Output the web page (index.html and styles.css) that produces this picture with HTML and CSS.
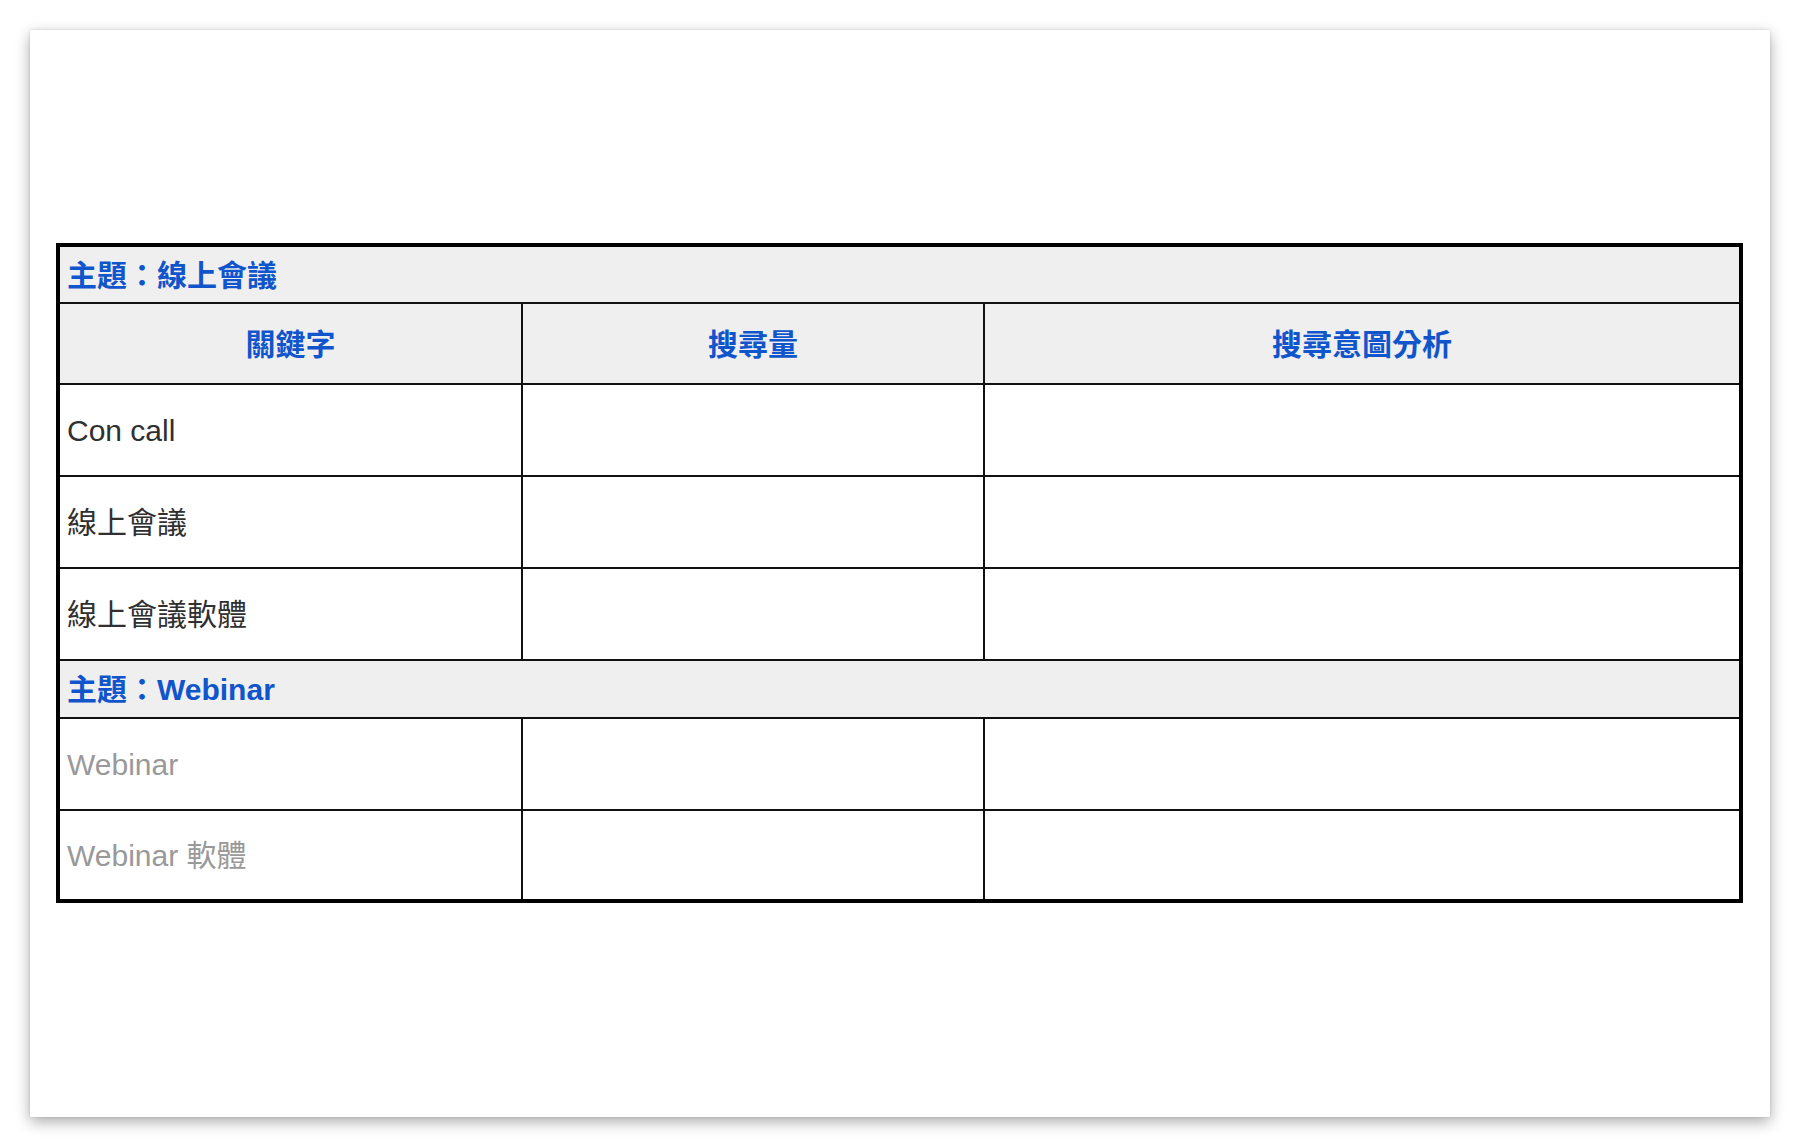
FILE: index.html
```html
<!DOCTYPE html>
<html lang="zh-Hant">
<head>
<meta charset="utf-8">
<title>關鍵字表</title>
<link rel="stylesheet" href="styles.css">
</head>
<body>
<div class="page">
  <table class="kw">
    <colgroup>
      <col class="c1"><col class="c2"><col class="c3">
    </colgroup>
    <tbody>
      <tr class="topic"><td colspan="3">主題：線上會議</td></tr>
      <tr class="head"><td>關鍵字</td><td>搜尋量</td><td>搜尋意圖分析</td></tr>
      <tr class="row"><td>Con call</td><td></td><td></td></tr>
      <tr class="row"><td>線上會議</td><td></td><td></td></tr>
      <tr class="row"><td>線上會議軟體</td><td></td><td></td></tr>
      <tr class="topic topic2"><td colspan="3">主題：Webinar</td></tr>
      <tr class="row muted"><td>Webinar</td><td></td><td></td></tr>
      <tr class="row muted last"><td>Webinar 軟體</td><td></td><td></td></tr>
    </tbody>
  </table>
</div>
</body>
</html>
```

FILE: styles.css
```css
html, body {
  margin: 0;
  padding: 0;
  background: #ffffff;
}

body {
  font-family: "Liberation Sans", "Noto Sans CJK TC", Arial, sans-serif;
  width: 1800px;
  height: 1148px;
  overflow: hidden;
}

.page {
  margin: 30px 0 0 30px;
  width: 1740px;
  height: 1087px;
  background: #ffffff;
  box-shadow: 0 5px 14px rgba(0, 0, 0, 0.32), 0 0 3px rgba(0, 0, 0, 0.12);
  padding-top: 213px;
  padding-left: 26px;
  box-sizing: border-box;
}

.kw {
  border-collapse: collapse;
  table-layout: fixed;
  width: 1683px;
  border: 4px solid #000;
  font-size: 30px;
  color: #303030;
}

.c1 { width: 464px; }
.c2 { width: 462px; }
.c3 { width: 757px; }

.kw td {
  border: 2px solid #111;
  padding: 2px 7px 0;
  vertical-align: middle;
  line-height: 1.2;
}

.topic td {
  background: #efefef;
  color: #1155cc;
  font-weight: bold;
  height: 53px;
}

.topic2 td {
  height: 54px;
}

.head td {
  background: #efefef;
  color: #1155cc;
  font-weight: bold;
  text-align: center;
  height: 77px;
}

.row td {
  height: 88px;
}

.muted td {
  color: #999999;
}

.last td {
  height: 86px;
}
```
